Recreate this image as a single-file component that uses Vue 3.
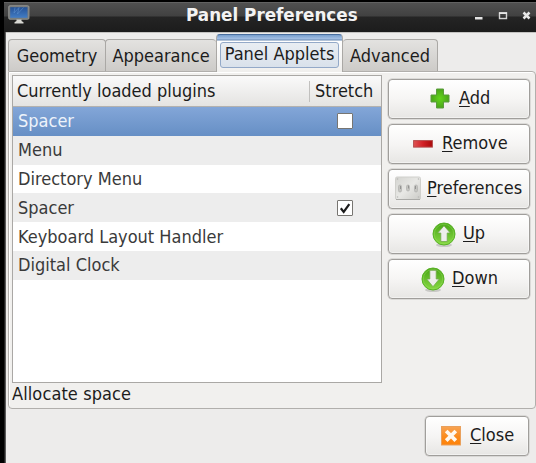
<script setup>
import { ref } from 'vue'

const tabs = [
  { label: 'Geometry', cls: 'geometry' },
  { label: 'Appearance', cls: 'appearance' },
  { label: 'Panel Applets', cls: 'applets' },
  { label: 'Advanced', cls: 'advanced' },
]
const activeTab = ref('Panel Applets')
const plugins = ref([
  { name: 'Spacer', stretch: false },
  { name: 'Menu' },
  { name: 'Directory Menu' },
  { name: 'Spacer', stretch: true },
  { name: 'Keyboard Layout Handler' },
  { name: 'Digital Clock' },
])
const selected = ref(0)
const actions = ['Add', 'Remove', 'Preferences', 'Up', 'Down']
</script>

<template>
  <div class="window">
    <header class="titlebar">
      <svg class="monitor" width="22" height="20" viewBox="0 0 22 20">
        <defs>
          <linearGradient id="screen" x1="0" y1="0" x2="0" y2="1">
            <stop offset="0" stop-color="#245196" />
            <stop offset="1" stop-color="#437dc4" />
          </linearGradient>
        </defs>
        <path d="M8.500 14h5v2l2 1.200v1.300h-9v-1.300l2-1.200z" fill="#d8d8d3" />
        <rect x="0.7" y="0.7" width="20.3" height="13.6" rx="1.3" fill="#777a79" stroke="#999c9a" stroke-width=".8" />
        <rect x="2.2" y="2.2" width="17.3" height="10.6" fill="url(#screen)" />
        <path d="M7 2.500 6 8l5-5.500L9.500 9l6-6.500" fill="none" stroke="#5f91cf" stroke-width="1" opacity=".55" />
      </svg>
      <h1>Panel Preferences</h1>
      <svg class="controls" width="58" height="12" viewBox="0 0 58 12">
        <path d="M2 7h7.500v2.500H2z" fill="#e4e4e4" />
        <path d="M26.500 3h7v5.500h-7z" fill="none" stroke="#d4d4d4" stroke-width="1.4" />
        <path d="M26 2.300h8v1.700h-8z" fill="#e8e8e8" />
        <path d="m50.500 2.500 6 6m0-6-6 6" stroke="#e8e8e8" stroke-width="2.500" />
      </svg>
    </header>

    <nav class="tabs">
      <button
        v-for="t in tabs"
        :key="t.label"
        class="tab"
        :class="[t.cls, { active: activeTab === t.label }]"
        @click="activeTab = t.label"
      ><span>{{ t.label }}</span></button>
    </nav>

    <main class="panel">
      <section class="left">
        <div class="list">
          <div class="list-head">
            <span class="col-name">Currently loaded plugins</span>
            <span class="col-stretch">Stretch</span>
          </div>
          <div
            v-for="(p, i) in plugins"
            :key="i"
            class="row"
            :class="{ selected: selected === i }"
            @click="selected = i"
          >
            <span class="row-name">{{ p.name }}</span>
            <span v-if="p.stretch !== undefined" class="check">
              <svg v-if="p.stretch" width="14" height="14" viewBox="0 0 14 14">
                <path d="m2.800 7.300 2.900 3.700 5.600-7.800" fill="none" stroke="#1c1c1c" stroke-width="2.200" />
              </svg>
            </span>
          </div>
        </div>
        <p class="hint">Allocate space</p>
      </section>

      <aside class="actions">
        <button v-for="a in actions" :key="a" class="btn" :class="a.toLowerCase()">
          <svg v-if="a === 'Add'" class="icon" width="20" height="21" viewBox="0 0 20 21">
            <defs>
              <radialGradient id="plus"><stop offset="0" stop-color="#63d51c" /><stop offset="1" stop-color="#4aa51a" /></radialGradient>
            </defs>
            <path d="M6.500 1h7v6h5.500v7h-5.500v6h-7v-6H1V7h5.500z" fill="url(#plus)" stroke="#5a9c3c" stroke-width="1" />
          </svg>
          <svg v-else-if="a === 'Remove'" class="icon" width="20" height="8" viewBox="0 0 20 8">
            <defs>
              <linearGradient id="minus"><stop offset="0" stop-color="#df5353" /><stop offset=".5" stop-color="#d22026" /><stop offset="1" stop-color="#a90909" /></linearGradient>
            </defs>
            <rect x=".6" y=".6" width="18.800" height="6.500" fill="url(#minus)" stroke="#b44c4c" />
          </svg>
          <svg v-else-if="a === 'Preferences'" class="icon" width="26" height="25" viewBox="0 0 26 25">
            <defs>
              <linearGradient id="plate" x2="1" y2="1"><stop offset="0" stop-color="#d4d4d0" /><stop offset=".5" stop-color="#e8e8e5" /><stop offset="1" stop-color="#cbcbc7" /></linearGradient>
            </defs>
            <rect x=".5" y="1" width="25" height="22.500" rx="1.500" fill="url(#plate)" stroke="#d0d0cc" />
            <path d="M1 23.500h24" stroke="#aaaaa7" />
            <g fill="#c5c5c1" stroke="#b4b4b1" stroke-width=".8">
              <rect x="3.500" y="9" width="3" height="7" rx="1.500" /><rect x="11.500" y="9" width="3" height="6" rx="1.500" /><rect x="19.500" y="9" width="3" height="7" rx="1.500" />
            </g>
            <path d="M5.500 10v3M13.500 9.500v3M20.500 10v3" stroke="#949492" />
            <g fill="#b9b9b6"><circle cx="2.500" cy="3" r=".8" /><circle cx="23.500" cy="3" r=".8" /><circle cx="2.500" cy="21" r=".8" /><circle cx="23.500" cy="21" r=".8" /></g>
          </svg>
          <svg v-else class="icon" width="24" height="26" viewBox="0 0 24 26">
            <defs>
              <linearGradient :id="'disc' + a" x2="0" y2="1"><stop offset="0" stop-color="#48a516" /><stop offset="1" stop-color="#87d943" /></linearGradient>
            </defs>
            <ellipse cx="12" cy="23" rx="8" ry="2" fill="#c9c9c6" />
            <circle cx="12" cy="12" r="11" :fill="'url(#disc' + a + ')'" stroke="#59b326" />
            <circle cx="12" cy="12" r="9.700" fill="none" stroke="#9ae063" stroke-width=".7" opacity=".6" />
            <path v-if="a === 'Up'" d="m12 3.800 6.300 7.200h-3.100v8.500H8.800V11H5.700z" fill="#eeeeec" stroke="#72a94b" stroke-width=".8" />
            <path v-else d="M8.800 3.300h6.400V12h3.100L12 19.700 5.700 12h3.100z" fill="#eeeeec" stroke="#72a94b" stroke-width=".8" />
          </svg>
          <span class="label"><u>{{ a[0] }}</u>{{ a.slice(1) }}</span>
        </button>
      </aside>
    </main>

    <footer class="footer">
      <button class="btn close">
        <svg class="icon" width="20" height="20" viewBox="0 0 20 20">
          <defs>
            <linearGradient id="orange" x2="0" y2="1"><stop offset="0" stop-color="#f8a454" /><stop offset=".55" stop-color="#fb8b1c" /><stop offset="1" stop-color="#ff8208" /></linearGradient>
          </defs>
          <rect x=".5" y=".5" width="19" height="18.500" fill="url(#orange)" stroke="#e9a05c" />
          <path d="m5.200 5 9.600 9.600m0-9.600-9.600 9.600" stroke="#fff8ef" stroke-width="3.800" />
        </svg>
        <span class="label"><u>C</u>lose</span>
      </button>
    </footer>
  </div>
</template>

<style>
body { margin: 0; background: #000; overflow: hidden; }
</style>

<style scoped>
* { box-sizing: border-box; }
.window {
  width: 536px;
  height: 463px;
  padding-top: 2px;
  display: flex;
  flex-direction: column;
  overflow: hidden;
  border-left: 4px solid #000;
  background: linear-gradient(90deg, #222 0 1px, #5c5c5c 1px 2px, #edeceb 2px);
  background-origin: padding-box;
  font-family: "DejaVu Sans Condensed", "DejaVu Sans", sans-serif;
  font-stretch: condensed;
  font-size: 18px;
  color: #1c1c1c;
  white-space: nowrap;
}
.titlebar {
  height: 30px;
  flex: none;
  display: flex;
  align-items: flex-start;
  padding-left: 4px;
  border-top: 1px solid #626262;
  background: linear-gradient(#505050, #414141 13px, #242424 14px, #1c1c1c);
  box-shadow: 0 -2px #000;
}
.monitor { flex: none; margin-top: 2px; }
h1 {
  margin: 0 0 0 156px;
  width: 173px;
  flex: none;
  font-family: "DejaVu Sans", sans-serif;
  font-stretch: normal;
  font-size: 16.8px;
  line-height: 24px;
  color: #f3f3f3;
}
.controls { margin-left: 114px; margin-top: 7px; flex: none; }
.tabs {
  height: 39px;
  flex: none;
  display: flex;
  align-items: flex-end;
  border-top: 1px solid #c4c3c1;
  margin-left: 2px;
  padding-left: 2px;
}
.tab {
  height: 32px;
  padding: 0 0 1px;
  font: inherit;
  color: inherit;
  border: 1px solid #aaa8a5;
  border-bottom: 0;
  border-radius: 4px 4px 0 0;
  background: linear-gradient(#e3e2e0, #cdcbc8);
}
.geometry { width: 98px; }
.appearance { width: 111px; margin-left: -1px; border-right: 0; }
.applets { width: 127px; }
.advanced { width: 95px; border-left: 0; }
.tab span { display: block; }
.tab.active {
  position: relative;
  height: 38px;
  padding: 0;
  margin-bottom: -1px;
  border-radius: 4px 4px 0 0;
  border-top: 1px solid #496e9e;
  background: linear-gradient(#779fce 0, #a5c1e5 4px, #6586b0 5px, #fff 6px, #f0efed 100%);
}
.tab.active span {
  width: 119px;
  height: 26px;
  margin: 2px auto 0;
  line-height: 22px;
  border: 1px solid #93a9c8;
  border-radius: 3px;
  background: linear-gradient(#e9edf2, #d9e1eb);
}
.panel {
  width: 528px;
  height: 338px;
  flex: none;
  margin-left: 4px;
  padding: 3px 0 0 3px;
  display: flex;
  border: 1px solid #b1afac;
  border-radius: 0 4px 4px 4px;
  background: #f1f0ee;
  box-shadow: inset 1px 1px #fff;
}
.left { width: 370px; }
.list {
  height: 308px;
  border: 1px solid #aaa8a5;
  background: #fff;
}
.list-head {
  height: 31px;
  display: flex;
  border-bottom: 1px solid #b3b1ae;
  background: linear-gradient(#fafafa, #e4e3e1);
  line-height: 29px;
}
.col-name { width: 296px; padding-left: 4px; }
.col-stretch { height: 21px; line-height: 19px; margin-top: 5px; padding-left: 5px; border-left: 1px solid #c1c0be; }
.row {
  height: 28.8px;
  display: flex;
  align-items: center;
  padding-left: 5px;
  color: #3a3a3a;
}
.row:nth-child(odd) { background: #ededed; }
.row.selected { background: linear-gradient(#83a6d8, #668fc5); color: #edf3fa; }
.row-name { width: 319px; line-height: 28px; }
.check {
  width: 16px;
  height: 16px;
  border: 1px solid #777571;
  background: #fff;
  border-radius: 1px;
}
.check svg { display: block; }
.hint { margin: 0; line-height: 22px; letter-spacing: .1px; }
.actions {
  display: flex;
  flex-direction: column;
  gap: 5px;
  margin: 4px 0 0 6px;
}
.btn {
  width: 142px;
  height: 40px;
  flex: none;
  display: flex;
  align-items: center;
  padding: 0;
  border: 1px solid #a09e9b;
  border-radius: 4px;
  background: linear-gradient(#fff, #f6f5f4 50%, #e7e6e4);
  box-shadow: inset 0 0 0 1px rgba(255,255,255,.45), 0 0 0 .5px #c6c4c2;
  font: inherit;
  color: inherit;
}
.icon { flex: none; }
.label { line-height: 36px; height: 38px; }
u { text-decoration-thickness: 1px; text-underline-offset: 2px; }
.add .icon { margin: 0 9px 1px 41px; }
.remove .icon { margin: 0 9px 0 24px; }
.preferences .icon { margin: 0 6px 1px 6px; }
.up .icon { margin: 1px 7px 0 43px; }
.down .icon { margin: 1px 7px 0 32px; }
.footer {
  display: flex;
  justify-content: flex-end;
  padding: 7px 7px 0 0;
}
.close { width: 104px; }
.close .icon { margin: 0 9px 1px 15px; }
</style>
